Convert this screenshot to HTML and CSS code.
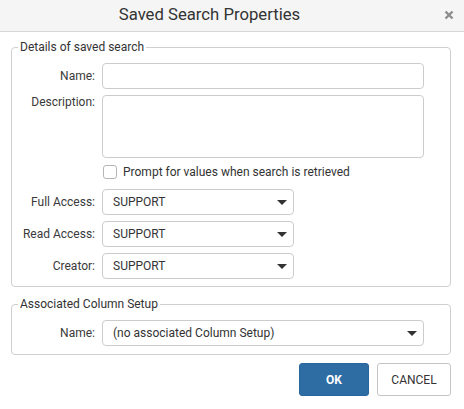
FILE: index.html
```html
<!DOCTYPE html>
<html>
<head>
<meta charset="utf-8">
<link rel="stylesheet" href="styles.css">
</head>
<body>
<div class="dialog">
  <div class="header">
    <span class="title">Saved Search Properties</span>
    <span class="close">
      <svg width="10" height="10" viewBox="0 0 10 10"><path d="M1.5 1.5 L8.5 8.5 M8.5 1.5 L1.5 8.5" stroke="#8c8c8c" stroke-width="2.4" stroke-linecap="butt"/></svg>
    </span>
  </div>
  <div class="body">
    <fieldset class="group group-details">
      <legend>Details of saved search</legend>
      <div class="form">
        <label class="lbl">Name:</label>
        <div class="input"></div>
        <label class="lbl lbl-top">Description:</label>
        <div class="input textarea"></div>
        <span></span>
        <div class="check-row"><span class="checkbox"></span><span class="check-text">Prompt for values when search is retrieved</span></div>
        <label class="lbl">Full Access:</label>
        <div class="select short"><span>SUPPORT</span><span class="arrow"></span></div>
        <label class="lbl">Read Access:</label>
        <div class="select short"><span>SUPPORT</span><span class="arrow"></span></div>
        <label class="lbl">Creator:</label>
        <div class="select short"><span>SUPPORT</span><span class="arrow"></span></div>
      </div>
    </fieldset>
    <fieldset class="group group-columns">
      <legend>Associated Column Setup</legend>
      <div class="form">
        <label class="lbl">Name:</label>
        <div class="select"><span>(no associated Column Setup)</span><span class="arrow"></span></div>
      </div>
    </fieldset>
  </div>
  <div class="actions">
    <button class="btn btn-primary">OK</button>
    <button class="btn btn-default">CANCEL</button>
  </div>
</div>
</body>
</html>
```
FILE: styles.css
```css
* { box-sizing: border-box; }
html, body { margin: 0; padding: 0; background: #fff; }
body { font-family: Roboto, "Liberation Sans", Arial, sans-serif; color: #333; font-size: 12px; }
.dialog { width: 464px; height: 409px; background: #fff; }
.header {
  height: 32px;
  background: #f5f5f5;
  border-bottom: 1px solid #d6d6d6;
  display: flex;
  align-items: center;
  position: relative;
  padding-right: 45px;
}
.title { flex: 1; text-align: center; font-size: 16.7px; color: #333; line-height: 20px; padding-bottom: 1px; }
.close { position: absolute; right: 10px; top: 10px; width: 10px; height: 10px; display: flex; }
.body { padding: 7px 13px 0 11px; }
.group {
  margin: 0;
  border: 1px solid #cfcfcf;
  border-radius: 4px;
  min-width: 0;
  padding: 8px 26px 7px 0;
}
.group legend {
  font-size: 12px;
  line-height: 16px;
  color: #333;
  padding: 0 2px;
  margin-left: 6px;
}
.group-columns { margin-top: 9px; padding-bottom: 8px; }
.form {
  display: grid;
  grid-template-columns: 83px 1fr;
  column-gap: 7px;
  row-gap: 6px;
}
.lbl { text-align: right; line-height: 14px; padding-top: 6px; color: #3a3a3a; }
.lbl-top { padding-top: 0; }
.input { height: 26px; border: 1px solid #cccccc; border-radius: 4px; background: #fff; }
.textarea { height: 63px; }
.check-row { display: flex; align-items: center; height: 14px; margin: 1px 0 4px; }
.checkbox { width: 14px; height: 14px; border: 1px solid #b5b5b5; border-radius: 3px; margin-left: 1px; background: #fff; }
.check-text { margin-left: 6px; line-height: 14px; }
.select {
  height: 26px;
  border: 1px solid #cccccc;
  border-radius: 4px;
  background: #fff;
  display: flex;
  align-items: center;
  justify-content: space-between;
  padding: 0 6px 0 10px;
  color: #333;
}
.select.short { width: 192px; }
.arrow { width: 0; height: 0; border-left: 5px solid transparent; border-right: 5px solid transparent; border-top: 5px solid #333; }
.actions { display: flex; justify-content: flex-end; gap: 8px; padding: 8px 13px 0 0; }
.btn { height: 33px; font-family: Roboto, "Liberation Sans", Arial, sans-serif; font-size: 12px; border-radius: 3px; cursor: pointer; }
.btn-primary { width: 70px; background: #2e6da4; color: #fff; border: 1px solid #2a65a0; font-weight: bold; }
.btn-default { width: 74px; background: #fff; color: #333; border: 1px solid #c4c4c4; }
```
